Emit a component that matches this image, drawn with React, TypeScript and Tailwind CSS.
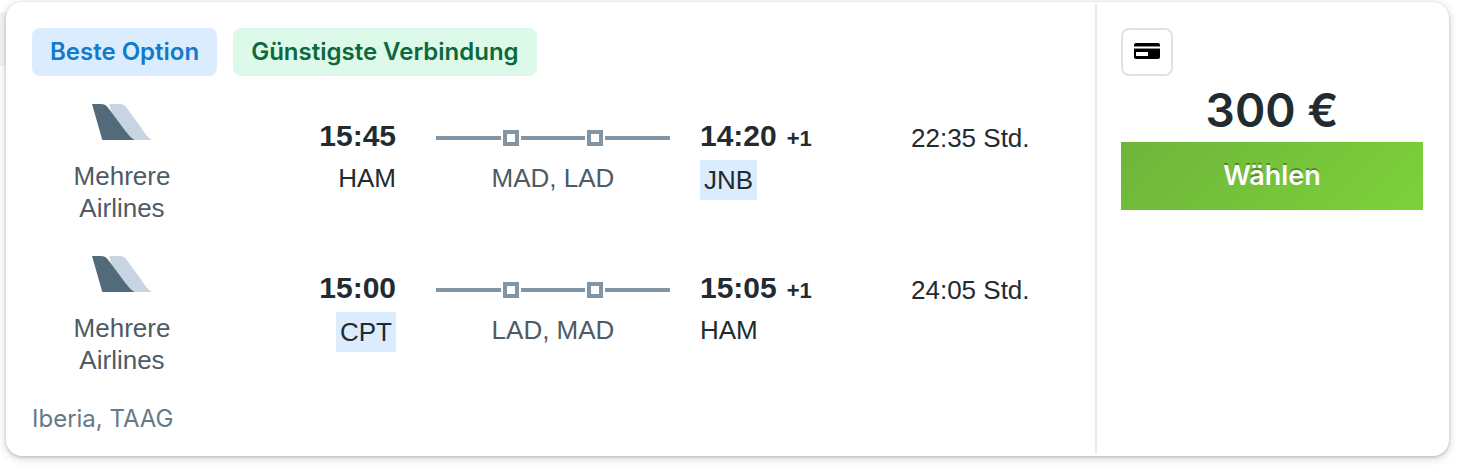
type Airport = { code: string; highlighted?: boolean };

type Leg = {
  departure: string;
  origin: Airport;
  stops: string[];
  arrival: string;
  destination: Airport;
  dayOffset: string;
  duration: string;
};

const legs: Leg[] = [
  {
    departure: "15:45",
    origin: { code: "HAM" },
    stops: ["MAD", "LAD"],
    arrival: "14:20",
    destination: { code: "JNB", highlighted: true },
    dayOffset: "+1",
    duration: "22:35 Std.",
  },
  {
    departure: "15:00",
    origin: { code: "CPT", highlighted: true },
    stops: ["LAD", "MAD"],
    arrival: "15:05",
    destination: { code: "HAM" },
    dayOffset: "+1",
    duration: "24:05 Std.",
  },
];

function TailFins() {
  return (
    <svg viewBox="0 0 60 36" className="h-9 w-[60px]" aria-hidden="true">
      <path
        d="M17.5 0H27.5C30.5 0 32.5 1 34.5 3.5L50 25C53.5 30 56 34 60 36H36L20 13.5Z"
        fill="#c8d4e1"
      />
      <path
        d="M0 0H8.5C12 0 13.8 .8 15.7 3.2L33 26.5C36.5 31 39 34 42.5 36H10.3Z"
        fill="#526a7a"
      />
    </svg>
  );
}

function CardIcon() {
  return (
    <svg viewBox="0 0 26 16" className="h-4 w-[26px]" aria-hidden="true">
      <path d="M2 0H24Q26 0 26 2V3H0V2Q0 0 2 0Z" fill="#000" />
      <path d="M0 6H26V14Q26 16 24 16H2Q0 16 0 14Z" fill="#000" />
      <path d="M0 3H26V4H0ZM0 5H26V6H0Z" fill="#8a8f8d" />
      <path d="M2 9H14V13H2Z" fill="#fff" />
    </svg>
  );
}

function AirportCode({ code, highlighted }: Airport) {
  return (
    <span
      className={
        highlighted
          ? "mt-1 bg-[#dbecff] px-1 leading-10"
          : "mt-1 leading-9"
      }
    >
      {code}
    </span>
  );
}

function StopSquare() {
  return <span className="size-4 shrink-0 border-4 border-[#8295a5]" />;
}

function Track() {
  return <span className="h-1 flex-1 bg-[#8295a5]" />;
}

function LegRow({ leg }: { leg: Leg }) {
  return (
    <li className="grid grid-cols-[180px_184px_minmax(0,274fr)_minmax(0,241fr)_160px] text-[26px]">
      <div className="flex flex-col items-center gap-5 text-center leading-8 text-[#4d5b66]">
        <TailFins />
        <span>
          Mehrere
          <br />
          Airlines
        </span>
      </div>
      <div className="flex flex-col items-end pt-3">
        <span className="text-[30px] leading-10 font-bold">{leg.departure}</span>
        <AirportCode {...leg.origin} />
      </div>
      <div className="pt-[26px] pl-10 text-center text-[#4d5b66]">
        <div className="flex items-center gap-[2px]">
          <Track />
          <StopSquare />
          <Track />
          <StopSquare />
          <Track />
        </div>
        <p className="mt-[14px] leading-9">{leg.stops.join(", ")}</p>
      </div>
      <div className="flex flex-col items-start pt-3 pl-[30px]">
        <div className="flex h-10 items-baseline gap-[10px] leading-10 font-bold whitespace-nowrap">
          <span className="text-[30px]">{leg.arrival}</span>
          <span className="text-[22px] leading-8">{leg.dayOffset}</span>
        </div>
        <AirportCode {...leg.destination} />
      </div>
      <span className="pt-[14px] leading-10 whitespace-nowrap">{leg.duration}</span>
    </li>
  );
}

export default function App() {
  return (
    <main className="relative bg-white pt-[2px] pr-[15px] pb-[14px] pl-[6px] font-['Liberation_Sans',Arial,sans-serif] text-[#212b30]">
      <div className="absolute top-3 left-0 h-[54px] w-3 bg-[#f3f5f7]" />
      <article className="relative flex rounded-2xl bg-white py-[2px] shadow-[0_2px_8px_rgba(37,51,57,0.24),0_1px_3px_rgba(37,51,57,0.2)]">
        <section className="min-w-0 flex-1 pt-6 pr-6 pb-[19px] pl-[26px]">
          <div className="flex gap-4 font-['Inter',sans-serif] text-[24px] leading-[48px] font-semibold">
            <span className="rounded-lg bg-[#dbecff] px-[18px] text-[#1279cb]">Beste Option</span>
            <span className="rounded-lg bg-[#dcf9ea] px-[18px] text-[#0e683d]">
              Günstigste Verbindung
            </span>
          </div>
          <ul className="mt-7 flex flex-col gap-8">
            {legs.map((leg) => (
              <LegRow key={leg.departure} leg={leg} />
            ))}
          </ul>
          <p className="mt-[27px] font-['Inter',sans-serif] text-[24px] leading-8 text-[#667987]">
            Iberia, TAAG
          </p>
        </section>
        <aside className="w-[354px] shrink-0 border-l-2 border-[#e4eaee] pt-6 pr-[26px] pl-6 font-['Inter',sans-serif]">
          <div className="flex h-12 w-[52px] items-center justify-center rounded-lg border-2 border-[#d9e3e9] pb-[2px]">
            <CardIcon />
          </div>
          <p className="mt-2 mb-[6px] text-center text-[46px] leading-[52px] font-semibold">300 €</p>
          <button
            type="button"
            className="h-[68px] w-full bg-linear-[135deg,#6eb53a,#7dd13a] text-[27px] font-semibold text-white [text-shadow:0_-2px_0_rgba(0,0,0,0.3)]"
          >
            Wählen
          </button>
        </aside>
      </article>
    </main>
  );
}
